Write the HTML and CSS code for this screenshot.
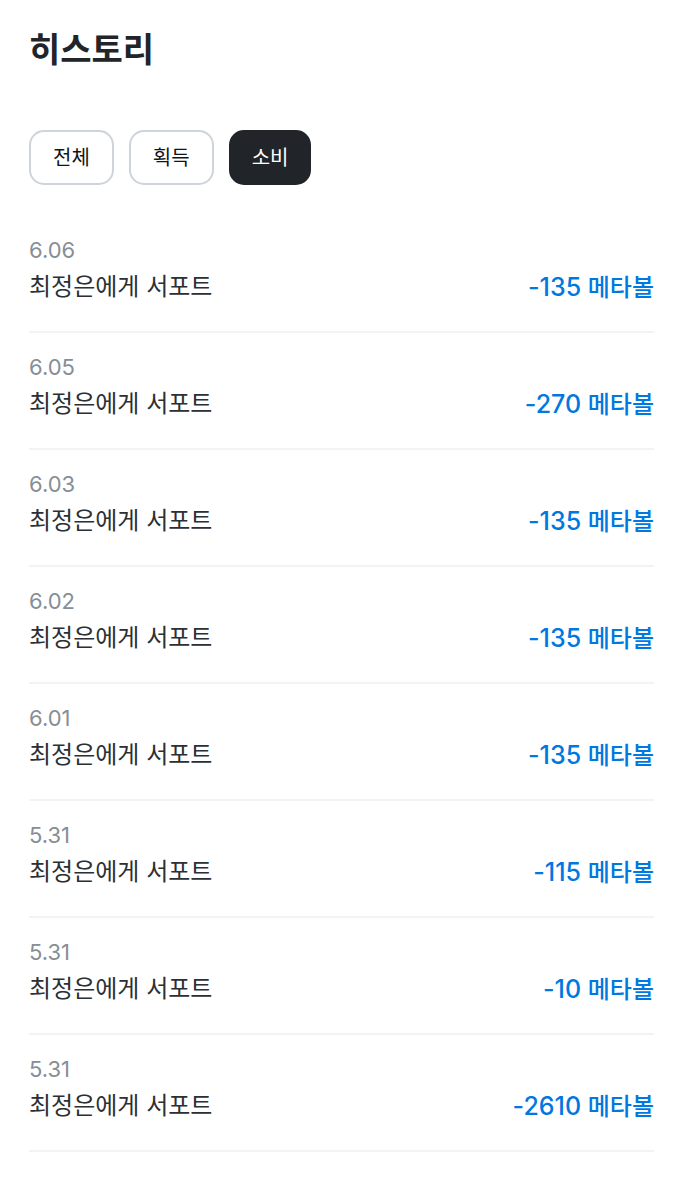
FILE: index.html
```html
<!DOCTYPE html>
<html lang="ko">
<head>
    <meta charset="UTF-8">
    <meta name="viewport" content="width=device-width, initial-scale=1.0">
    <title>히스토리</title>
    <link rel="stylesheet" href="styles.css">
</head>
<body>
    <main class="history">
        <h1 class="title">히스토리</h1>

        <div class="filters">
            <button type="button" class="filter">전체</button>
            <button type="button" class="filter">획득</button>
            <button type="button" class="filter active">소비</button>
        </div>

        <ul class="list">
            <li class="item">
                <div class="date">6.06</div>
                <div class="row"><span class="name">최정은에게 서포트</span><span class="amount">-135 <span class="unit">메타볼</span></span></div>
            </li>
            <li class="item">
                <div class="date">6.05</div>
                <div class="row"><span class="name">최정은에게 서포트</span><span class="amount">-270 <span class="unit">메타볼</span></span></div>
            </li>
            <li class="item">
                <div class="date">6.03</div>
                <div class="row"><span class="name">최정은에게 서포트</span><span class="amount">-135 <span class="unit">메타볼</span></span></div>
            </li>
            <li class="item">
                <div class="date">6.02</div>
                <div class="row"><span class="name">최정은에게 서포트</span><span class="amount">-135 <span class="unit">메타볼</span></span></div>
            </li>
            <li class="item">
                <div class="date">6.01</div>
                <div class="row"><span class="name">최정은에게 서포트</span><span class="amount">-135 <span class="unit">메타볼</span></span></div>
            </li>
            <li class="item">
                <div class="date">5.31</div>
                <div class="row"><span class="name">최정은에게 서포트</span><span class="amount">-115 <span class="unit">메타볼</span></span></div>
            </li>
            <li class="item">
                <div class="date">5.31</div>
                <div class="row"><span class="name">최정은에게 서포트</span><span class="amount">-10 <span class="unit">메타볼</span></span></div>
            </li>
            <li class="item">
                <div class="date">5.31</div>
                <div class="row"><span class="name">최정은에게 서포트</span><span class="amount">-2610 <span class="unit">메타볼</span></span></div>
            </li>
        </ul>
    </main>
</body>
</html>
```
FILE: styles.css
```css
* {
    box-sizing: border-box;
}

body {
    margin: 0;
    background-color: #ffffff;
    color: #212529;
    font-family: Inter, "Noto Sans CJK KR", sans-serif;
}

.history {
    padding: 25px 29px;
}

.title {
    margin: 0 0 55px;
    font-size: 34px;
    line-height: 50px;
    font-weight: 700;
}

.filters {
    display: flex;
    gap: 15px;
    margin-bottom: 50px;
}

.filter {
    height: 55px;
    padding: 0 22px 2px;
    border: 2px solid #ced4da;
    border-radius: 15px;
    background-color: #ffffff;
    color: #121417;
    font-family: inherit;
    font-size: 20px;
    font-weight: 400;
    cursor: pointer;
}

.filter.active {
    padding: 0 21px 2px;
    border-color: #212529;
    background-color: #212529;
    color: #ffffff;
}

.list {
    margin: 0;
    padding: 0;
    list-style: none;
}

.item {
    margin-bottom: 19px;
    padding-bottom: 26px;
    border-bottom: 2px solid #f1f3f5;
}

.date {
    margin-bottom: 4px;
    color: #868e96;
    font-size: 22px;
    line-height: 30px;
}

.row {
    display: flex;
    justify-content: space-between;
    line-height: 36px;
}

.name {
    color: #2b3035;
    font-size: 24px;
}

.amount {
    color: #0078df;
    font-size: 25px;
    font-weight: 500;
}

.unit {
    font-size: 24px;
    line-height: 30px;
}
```
